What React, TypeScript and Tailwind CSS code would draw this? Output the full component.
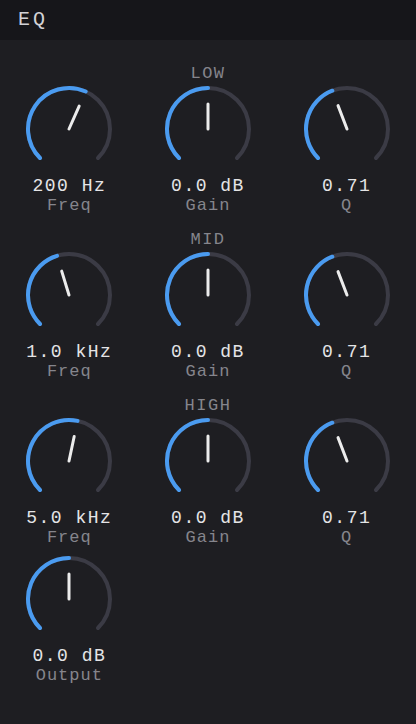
import React from 'react';

type KnobProps = {
  angle: number; // pointer angle in degrees, 0 = straight up, range -135..135
  value: string;
  label: string;
};

const R = 41;
const C = 44;

const polar = (deg: number, r: number) => {
  const a = (deg * Math.PI) / 180;
  return { x: C + r * Math.sin(a), y: C - r * Math.cos(a) };
};

const arcPath = (from: number, to: number) => {
  const s = polar(from, R);
  const e = polar(to, R);
  const large = to - from > 180 ? 1 : 0;
  return `M ${s.x} ${s.y} A ${R} ${R} 0 ${large} 1 ${e.x} ${e.y}`;
};

const Knob = ({ angle, value, label }: KnobProps) => {
  const tip = polar(angle, 25);
  return (
    <div className="flex flex-col items-center">
      <svg width="88" height="88" viewBox="0 0 88 88" className="mt-px">
        <path d={arcPath(-135, 135)} fill="none" stroke="#3b3b45" strokeWidth="4" strokeLinecap="round" />
        <path d={arcPath(-135, angle)} fill="none" stroke="#4a9bf0" strokeWidth="4" strokeLinecap="round" />
        <line x1={C} y1={C} x2={tip.x} y2={tip.y} stroke="#ececec" strokeWidth="3" strokeLinecap="round" />
      </svg>
      <div className="mt-[3px] h-5 leading-5 text-[18px] tracking-[1.5px] text-[#e4e4e6]">{value}</div>
      <div className="h-5 leading-5 text-[17px] tracking-[1px] text-[#85858c]">{label}</div>
    </div>
  );
};

const BANDS = [
  {
    name: 'LOW',
    knobs: [
      { angle: 24, value: '200 Hz', label: 'Freq' },
      { angle: 0, value: '0.0 dB', label: 'Gain' },
      { angle: -21, value: '0.71', label: 'Q' },
    ],
  },
  {
    name: 'MID',
    knobs: [
      { angle: -17, value: '1.0 kHz', label: 'Freq' },
      { angle: 0, value: '0.0 dB', label: 'Gain' },
      { angle: -21, value: '0.71', label: 'Q' },
    ],
  },
  {
    name: 'HIGH',
    knobs: [
      { angle: 12, value: '5.0 kHz', label: 'Freq' },
      { angle: 0, value: '0.0 dB', label: 'Gain' },
      { angle: -21, value: '0.71', label: 'Q' },
    ],
  },
];

export default function App() {
  return (
    <div className="min-h-screen bg-[#1e1e22] font-['Liberation_Mono',monospace]">
      <header className="h-10 bg-[#16161a] flex items-center px-[18px]">
        <span className="text-[20px] tracking-[3px] text-[#d2d2d6]">EQ</span>
      </header>
      <main className="pt-6 flex flex-col">
        {BANDS.map((band) => (
          <section key={band.name} className="mb-[14px]">
            <div className="h-5 leading-5 text-center text-[17px] tracking-[1.5px] text-[#85858c]">{band.name}</div>
            <div className="grid grid-cols-3">
              {band.knobs.map((k) => (
                <Knob key={k.label} {...k} />
              ))}
            </div>
          </section>
        ))}
        <div className="grid grid-cols-3 -mt-2">
          <Knob angle={0} value="0.0 dB" label="Output" />
        </div>
      </main>
    </div>
  );
}
